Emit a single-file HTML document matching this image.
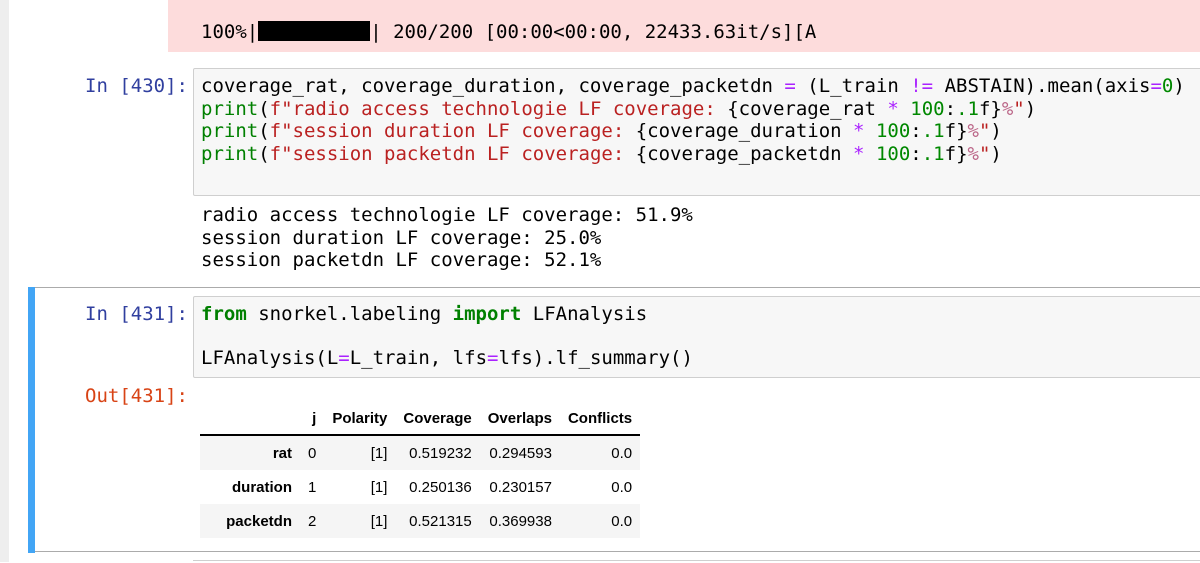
<!DOCTYPE html>
<html><head><meta charset="utf-8"><style>
body{margin:0;width:1200px;height:562px;overflow:hidden;background:#fff;position:relative;font-family:"DejaVu Sans Mono",monospace;}
.m{font-family:"DejaVu Sans Mono",monospace;font-size:19px;white-space:pre;position:absolute;line-height:22.5px;}
.p{color:#303f9f;text-align:right;width:188px;left:0;}
.o{color:#d84315;}
.g{color:#008000}.s{color:#ba2121}.op{color:#aa22ff}.n{color:#008800}.si{color:#bb6688}.k{color:#008000;font-weight:bold}
table{position:absolute;left:200px;top:403px;border-collapse:collapse;font-family:"Liberation Sans",sans-serif;font-size:15px;}
th,td{padding:0 8px;height:34px;text-align:right}
thead th{height:31px;border-bottom:2px solid #000;}
tbody tr:nth-child(odd){background:#f5f5f5}
tbody th{font-weight:bold}
</style></head><body>
<div style="position:absolute;left:0;top:0;width:9px;height:562px;background:#eee"></div>
<div style="position:absolute;left:168px;top:0;width:1032px;height:52px;background:#fddcdc"></div>
<div class="m" style="left:201px;top:21px">100%|<span style="display:inline-block;width:112px;height:20px;background:#000;vertical-align:-3px"></span>| 200/200 [00:00&lt;00:00, 22433.63it/s][A</div>

<div class="m p" style="top:75px">In [430]:</div>
<div style="position:absolute;left:193px;top:68px;width:1020px;height:126px;background:#f7f7f7;border:1px solid #cfcfcf;border-radius:2px"></div>
<div class="m" style="left:201px;top:75px">coverage_rat, coverage_duration, coverage_packetdn <span class="op">=</span> (L_train <span class="op">!=</span> ABSTAIN).mean(axis<span class="op">=</span><span class="n">0</span>)
<span class="g">print</span>(<span class="s">f"radio access technologie LF coverage: </span>{coverage_rat <span class="op">*</span> <span class="n">100</span>:<span class="n">.1</span>f}<span class="si">%</span><span class="s">"</span>)
<span class="g">print</span>(<span class="s">f"session duration LF coverage: </span>{coverage_duration <span class="op">*</span> <span class="n">100</span>:<span class="n">.1</span>f}<span class="si">%</span><span class="s">"</span>)
<span class="g">print</span>(<span class="s">f"session packetdn LF coverage: </span>{coverage_packetdn <span class="op">*</span> <span class="n">100</span>:<span class="n">.1</span>f}<span class="si">%</span><span class="s">"</span>)</div>
<div class="m" style="left:201px;top:204px">radio access technologie LF coverage: 51.9%
session duration LF coverage: 25.0%
session packetdn LF coverage: 52.1%</div>

<div style="position:absolute;left:28px;top:287px;width:1180px;height:265px;border:1px solid #ababab;box-sizing:border-box"></div>
<div style="position:absolute;left:28px;top:287px;width:7px;height:266px;background:#42a5f5"></div>
<div class="m p" style="top:303px">In [431]:</div>
<div style="position:absolute;left:193px;top:296px;width:1020px;height:80px;background:#f7f7f7;border:1px solid #cfcfcf;border-radius:2px"></div>
<div class="m" style="left:201px;top:303px;line-height:44px;top:292px"><span class="k">from</span> snorkel.labeling <span class="k">import</span> LFAnalysis
LFAnalysis(L<span class="op">=</span>L_train, lfs<span class="op">=</span>lfs).lf_summary()</div>
<div class="m p o" style="top:385px">Out[431]:</div>
<table>
<thead><tr><th></th><th>j</th><th>Polarity</th><th>Coverage</th><th>Overlaps</th><th>Conflicts</th></tr></thead>
<tbody>
<tr><th style="width:84px">rat</th><td style="text-align:left">0</td><td>[1]</td><td>0.519232</td><td>0.294593</td><td>0.0</td></tr>
<tr><th>duration</th><td style="text-align:left">1</td><td>[1]</td><td>0.250136</td><td>0.230157</td><td>0.0</td></tr>
<tr><th>packetdn</th><td style="text-align:left">2</td><td>[1]</td><td>0.521315</td><td>0.369938</td><td>0.0</td></tr>
</tbody></table>
<div style="position:absolute;left:193px;top:560px;width:1010px;height:2px;border-top:1px solid #cfcfcf"></div>
</body></html>
